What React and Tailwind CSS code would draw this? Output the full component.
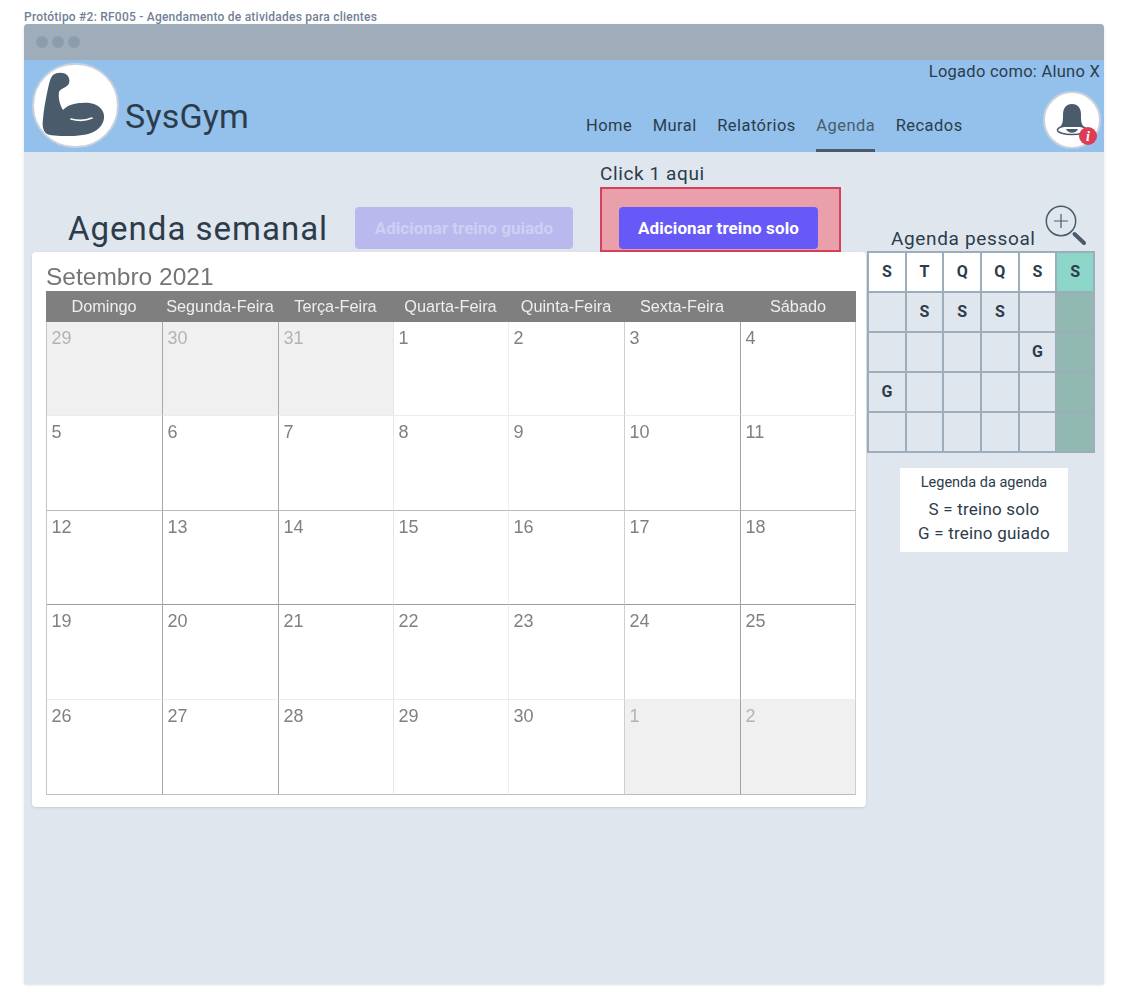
import React from 'react';

const navItems = ['Home', 'Mural', 'Relatórios', 'Agenda', 'Recados'];
const weekDays = ['Domingo', 'Segunda-Feira', 'Terça-Feira', 'Quarta-Feira', 'Quinta-Feira', 'Sexta-Feira', 'Sábado'];

const calendarRows = [
  { h: 'h-[94px]', line: 'border-b-[#ececec]', days: [29, 30, 31, 1, 2, 3, 4], muted: [0, 1, 2] },
  { h: 'h-[95px]', line: 'border-b-[#b9b9b9]', days: [5, 6, 7, 8, 9, 10, 11], muted: [] },
  { h: 'h-[94px]', line: 'border-b-[#9c9c9c]', days: [12, 13, 14, 15, 16, 17, 18], muted: [] },
  { h: 'h-[95px]', line: 'border-b-[#ececec]', days: [19, 20, 21, 22, 23, 24, 25], muted: [] },
  { h: 'h-[95px]', line: 'border-b-[#bdbdbd]', days: [26, 27, 28, 29, 30, 1, 2], muted: [5, 6] },
];

const columnLines = [
  'border-r-[#a8a8a8]',
  'border-r-[#a8a8a8]',
  'border-r-[#e6e6e6]',
  'border-r-[#eeeeee]',
  'border-r-[#cfcfcf]',
  'border-r-[#a3a3a3]',
  'border-r-[#cfcfcf]',
];

const agendaRows = [
  ['S', 'T', 'Q', 'Q', 'S', 'S'],
  ['', 'S', 'S', 'S', '', ''],
  ['', '', '', '', 'G', ''],
  ['G', '', '', '', '', ''],
  ['', '', '', '', '', ''],
];

const MuscleLogo = () => (
  <div className="w-[87px] h-[85px] rounded-full bg-white border-2 border-[#c9d2dc] shrink-0">
    <svg viewBox="2 2 83 81" className="w-[83px] h-[81px]">
      <path
        d="M21 12 C25 9 32 9 35 12 C38 15 38 20 36 22 C33 25 28 26 27 29 C26 35 28 42 31 47 C36 42 42 40 50 40 C58 39 66 41 70 47 C74 53 72 61 66 66 C60 71 50 73 38 73 C30 73 20 73 15 71 C11 68 10 63 11 56 C12 44 15 30 17 21 C18 17 19 14 21 12 Z"
        fill="#4a5c6b"
      />
      <path d="M39 56 C46 58 53 58 60 55" fill="none" stroke="#ffffff" strokeWidth="1.6" strokeLinecap="round" />
    </svg>
  </div>
);

const BellBadge = () => (
  <div className="w-[58px] h-[58px] rounded-full bg-white border-2 border-[#c9d2dc] shrink-0">
    <svg viewBox="0 0 54 54" className="w-[54px] h-[54px]">
      <path d="M15 34 C18 31 18 27 18 22 C18 15 21 11 27 11 C33 11 36 15 36 22 C36 27 36 31 39 34 Z" fill="#4a5c6b" />
      <ellipse cx="27" cy="37" rx="14.5" ry="4.5" fill="none" stroke="#4a5c6b" strokeWidth="1.6" />
      <path d="M21 36 L33 36 C31 41 23 41 21 36 Z" fill="#4a5c6b" />
      <circle cx="43" cy="43" r="9" fill="#de3b55" />
      <text x="43" y="48" textAnchor="middle" fontSize="14" fontWeight="700" fontStyle="italic" fontFamily="'Liberation Serif', serif" fill="#ffffff">i</text>
    </svg>
  </div>
);

const ZoomIcon = () => (
  <svg viewBox="0 0 42 42" className="w-[42px] h-[42px] shrink-0">
    <circle cx="16" cy="17" r="14.7" fill="none" stroke="#4a5c6b" strokeWidth="1.5" />
    <path d="M16 10 V24 M9 17 H23" stroke="#4a5c6b" strokeWidth="1.2" />
    <path d="M29.5 30 L39 39" stroke="#4a5c6b" strokeWidth="4" strokeLinecap="round" />
  </svg>
);

const Calendar = () => (
  <div className="w-[834px] h-[555px] bg-white rounded-sm shadow-sm px-[14px] font-['Liberation_Sans',sans-serif] blur-[0.3px]">
    <div className="h-[39px] pt-[11px] text-[24.5px] leading-[28px] text-[#757575]">Setembro 2021</div>
    <div className="grid grid-cols-[116px_116px_115px_115px_116px_116px_116px] w-[810px] h-[31px] bg-[#7f7f7f]">
      {weekDays.map((day) => (
        <div key={day} className="flex items-center justify-center text-[16.3px] text-[#eeeeee] whitespace-nowrap">
          {day}
        </div>
      ))}
    </div>
    <div className="w-[810px] border-l border-l-[#c4c4c4]">
      {calendarRows.map((row, i) => (
        <div key={i} className="grid grid-cols-[116px_116px_115px_115px_116px_116px_115px]">
          {row.days.map((day, j) => {
            const muted = row.muted.includes(j);
            return (
              <div
                key={j}
                className={`${row.h} ${row.line} ${columnLines[j]} border-b border-r pl-[4.5px] pt-[6px] text-[18px] leading-[20px] ${
                  muted ? 'bg-[#f0f0f0] text-[#b3b3b3]' : 'bg-white text-[#808080]'
                }`}
              >
                {day}
              </div>
            );
          })}
        </div>
      ))}
    </div>
  </div>
);

const AgendaGrid = () => (
  <div className="grid grid-cols-6 w-[228px] bg-[#9dadbb] p-[2px] gap-[2px]">
    {agendaRows.map((row, i) =>
      row.map((letter, j) => {
        let bg = i === 0 ? 'bg-white' : 'bg-[#dfe6ee]';
        if (j === 5) bg = i === 0 ? 'bg-[#8cd5c9]' : 'bg-[#92b9b1]';
        return (
          <div key={`${i}-${j}`} className={`${bg} h-[38px] flex items-center justify-center text-[16px] font-bold text-[#2d3c4b]`}>
            {letter}
          </div>
        );
      })
    )}
  </div>
);

export default function App() {
  return (
    <div className="w-[1128px] h-[1008px] bg-white font-['Roboto',sans-serif] text-[#2d3c4b] px-[24px]">
      <div className="h-[24px] pt-[10px] text-[12px] leading-[14px] tracking-[0.23px] font-medium text-[#718096] whitespace-nowrap">
        Protótipo #2: RF005 - Agendamento de atividades para clientes
      </div>

      <div className="w-[1080px] h-[960px] bg-[#dfe6ee] rounded-t-sm shadow-sm overflow-hidden">
        {/* barra da janela */}
        <div className="h-[36px] bg-[#9fadba] flex items-center gap-[4px] pl-[12px]">
          <span className="w-[12px] h-[12px] rounded-full bg-[#8c9cab]"></span>
          <span className="w-[12px] h-[12px] rounded-full bg-[#8c9cab]"></span>
          <span className="w-[12px] h-[12px] rounded-full bg-[#8c9cab]"></span>
        </div>

        {/* header */}
        <div className="h-[92px] bg-[#93c1ec] flex pl-[8px]">
          <div className="pt-[3px]">
            <MuscleLogo />
          </div>
          <div className="ml-[6px] pt-[36px] text-[34px] leading-[40px] tracking-[0.2px] w-[461px]">SysGym</div>
          <div className="flex-1 flex flex-col">
            <div className="h-[31px] pt-[2px] pr-[4px] text-right text-[16.5px] leading-[20px] tracking-[0.25px]">Logado como: Aluno X</div>
            <div className="flex-1 flex justify-between pr-[3px]">
              <div className="flex gap-[20.5px] pt-[25px]">
                {navItems.map((item) => (
                  <div
                    key={item}
                    className={`h-[36px] text-[16.5px] leading-[20px] tracking-[0.45px] ${
                      item === 'Agenda' ? 'text-[#4a5c6b] border-b-[3px] border-[#4a5c6b]' : ''
                    }`}
                  >
                    {item}
                  </div>
                ))}
              </div>
              <BellBadge />
            </div>
          </div>
        </div>

        {/* titulo e botoes */}
        <div className="h-[100px] flex items-end">
          <div className="w-[331px] pl-[44px] pb-[3px] text-[33px] leading-[40px] tracking-[1px] whitespace-nowrap">Agenda semanal</div>
          <div className="w-[218px] h-[42px] mb-[3px] pt-px rounded bg-[#bab9ee] text-[#d0cff3] flex items-center justify-center text-[17px] font-bold whitespace-nowrap">
            Adicionar treino guiado
          </div>
          <div className="ml-[27px] w-[241px]">
            <div className="h-[30px] pt-[5px] text-[19px] leading-[24px] tracking-[0.6px]">Click 1 aqui</div>
            <div className="h-[65px] bg-[#e9a0ab] border-2 border-[#d6405a] pt-[18px] pl-[17px]">
              <div className="w-[199px] h-[42px] pt-px rounded bg-[#6659f8] text-white flex items-center justify-center text-[17px] tracking-[0.1px] font-bold whitespace-nowrap">
                Adicionar treino solo
              </div>
            </div>
          </div>
          <div className="ml-[50px] flex items-end">
            <div className="pb-px text-[19px] leading-[24px] tracking-[0.65px] whitespace-nowrap">Agenda pessoal</div>
            <div className="ml-[9px] mb-[6px]">
              <ZoomIcon />
            </div>
          </div>
        </div>

        {/* calendario e agenda pessoal */}
        <div className="flex pl-[8px]">
          <Calendar />
          <div className="ml-[1px] -mt-px w-[228px]">
            <AgendaGrid />
            <div className="mt-[15px] ml-[33px] w-[168px] h-[84px] bg-white flex flex-col items-center pt-[6px]">
              <div className="text-[14.5px] leading-[18px] mb-[5px]">Legenda da agenda</div>
              <div className="text-[17px] leading-[24px] tracking-[0.2px]">S = treino solo</div>
              <div className="text-[17px] leading-[24px] tracking-[0.2px]">G = treino guiado</div>
            </div>
          </div>
        </div>
      </div>
    </div>
  );
}
